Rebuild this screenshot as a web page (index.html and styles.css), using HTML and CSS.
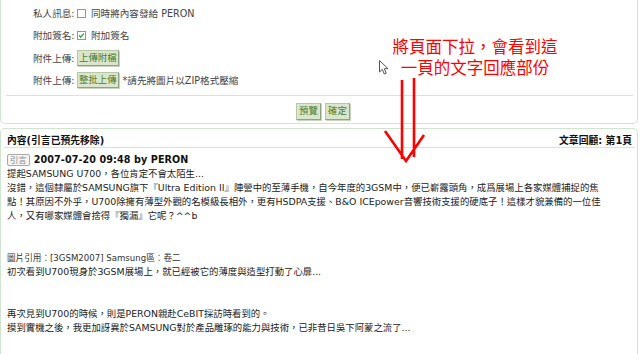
FILE: index.html
```html
<!DOCTYPE html>
<html lang="zh-Hant">
<head>
<meta charset="utf-8">
<title>回覆文章</title>
<link rel="stylesheet" href="styles.css">
</head>
<body>
<div class="page">
  <section class="panel form-panel">
    <div class="rows">
      <div class="row"><span class="label">私人訊息:</span><span class="cb"></span><span class="opt">同時將內容發給 PERON</span></div>
      <div class="row"><span class="label">附加簽名:</span><span class="cb"><svg viewBox="0 0 9 9" width="7" height="7"><path d="M1.5 4.5 L3.5 6.5 L7.5 2" fill="none" stroke="#21a121" stroke-width="1.6"/></svg></span><span class="opt">附加簽名</span></div>
      <div class="row"><span class="label">附件上傳:</span><button class="btn">上傳附檔</button></div>
      <div class="row"><span class="label">附件上傳:</span><button class="btn">整批上傳</button><span class="note">*請先將圖片以ZIP格式壓縮</span></div>
    </div>
    <div class="sep"></div>
    <div class="actions"><button class="btn">預覽</button><button class="btn">確定</button></div>
  </section>

  <section class="panel content-panel">
    <div class="head"><span>內容(引言已預先移除)</span><span>文章回顧: 第1頁</span></div>
    <div class="post">
      <div class="meta"><span class="badge">引言</span><b>2007-07-20 09:48 by PERON</b></div>
      <p class="body">提起SAMSUNG U700，各位肯定不會太陌生...<br>沒錯，這個隸屬於SAMSUNG旗下『Ultra Edition II』陣營中的至薄手機，自今年度的3GSM中，便已嶄露頭角，成爲展場上各家媒體捕捉的焦<br>點！其原因不外乎，U700除擁有薄型外觀的名模級長相外，更有HSDPA支援、B&amp;O ICEpower音響技術支援的硬底子！這樣才貌兼備的一位佳<br>人，又有哪家媒體會捨得『獨漏』它呢？^^b<br><br><br><span class="cite">圖片引用：[3GSM2007] Samsung區：卷二</span><br>初次看到U700現身於3GSM展場上，就已經被它的薄度與造型打動了心扉...<br><br><br>再次見到U700的時候，則是PERON親赴CeBIT採訪時看到的。<br>摸到實機之後，我更加訝異於SAMSUNG對於產品雕琢的能力與技術，已非昔日吳下阿蒙之流了...</p>
    </div>
  </section>

  <div class="annot">將頁面下拉，會看到這<br>一頁的文字回應部份</div>
  <svg class="arrow" width="50" height="92" viewBox="0 0 50 92"><path d="M22 5 V84 M34 3 V82 M5 56 L26 86 L44 60" fill="none" stroke="#ff0000" stroke-width="2.6"/></svg>
  <svg class="cursor" width="11" height="16" viewBox="0 0 11 16"><path d="M0.5 0.5 L0.5 12 L3.3 9.4 L5.3 14 L7.2 13.2 L5.3 8.7 L9 8.7 Z" fill="#fff" stroke="#555" stroke-width="1"/></svg>
</div>
</body>
</html>
```

FILE: styles.css
```css
html, body {
  margin: 0;
  padding: 0;
  background: #fff;
}
body {
  font-family: "DejaVu Sans", "Noto Sans CJK TC", sans-serif;
  font-size: 9.6px;
  color: #222;
  overflow: hidden;
}
.page {
  position: relative;
  width: 640px;
  height: 354px;
  overflow: hidden;
}
.panel {
  margin-right: 2px;
  border: 1.5px solid #cde6cd;
  background: #fff;
}
.form-panel {
  border-top: none;
  border-radius: 0 0 5px 5px;
  height: 124px;
  box-sizing: border-box;
  padding: 4px 4px 0;
}
.rows {
  display: flex;
  flex-direction: column;
  gap: 4.3px;
  padding-left: 28px;
}
.row {
  display: flex;
  align-items: center;
  height: 18px;
  color: #444;
}
.label {
  width: 42px;
  margin-right: 2px;
  color: #444;
}
.cb {
  width: 9px;
  height: 9px;
  border: 1px solid #7f9db9;
  background: #fff;
  box-sizing: border-box;
  margin-right: 5px;
  display: flex;
  align-items: center;
  justify-content: center;
}
.opt {
  color: #444;
}
.btn {
  font-family: "DejaVu Sans", "Noto Sans CJK TC", sans-serif;
  font-size: 9.4px;
  height: 16px;
  padding: 0 1px;
  line-height: 14px;
  color: #4c7a2c;
  background: #dae6cc;
  border: 1px solid #b6c8a6;
  border-right-color: #8fa37f;
  border-bottom-color: #8fa37f;
  box-shadow: 1px 1px 0 #c9d3c0;
  margin: 0;
}
.note {
  margin-left: 4px;
  color: #444;
}
.sep {
  height: 1px;
  background: #d3e8d3;
  margin: 6px 0 0 1px;
}
.actions {
  display: flex;
  justify-content: center;
  gap: 4px;
  padding-top: 7px;
  padding-left: 8px;
}
.actions .btn {
  width: 25px;
  height: 17px;
}
.content-panel {
  margin-top: 4px;
  border-bottom: none;
  border-radius: 5px 5px 0 0;
  height: 240px;
  padding: 0 3px;
}
.head {
  display: flex;
  justify-content: space-between;
  font-weight: bold;
  font-size: 9.8px;
  color: #111;
  padding: 6px 2px 0 3px;
  height: 11px;
  line-height: 11px;
  border-bottom: 1px solid #d3e8d3;
  padding-bottom: 1px;
}
.post {
  padding: 5px 0 0 3px;
  line-height: 14px;
}
.meta {
  display: flex;
  align-items: center;
  gap: 4px;
  height: 14px;
}
.meta b {
  color: #111;
  letter-spacing: 0.1px;
}
.badge {
  font-size: 8.4px;
  line-height: 10px;
  color: #888;
  border: 1px solid #aaa;
  border-radius: 2px;
  padding: 0 2px;
  background: #f4f4f4;
}
.body {
  margin: 0;
  white-space: nowrap;
  font-size: 9.4px;
  color: #222;
}
.cite {
  font-size: 8.6px;
  color: #333;
}
.annot {
  position: absolute;
  left: 385px;
  top: 36px;
  width: 180px;
  text-align: center;
  font-family: "Noto Sans CJK TC", sans-serif;
  font-size: 16.5px;
  line-height: 21px;
  color: #ff0000;
}
.arrow {
  position: absolute;
  left: 380px;
  top: 75px;
}
.cursor {
  position: absolute;
  left: 379px;
  top: 60px;
}
```
